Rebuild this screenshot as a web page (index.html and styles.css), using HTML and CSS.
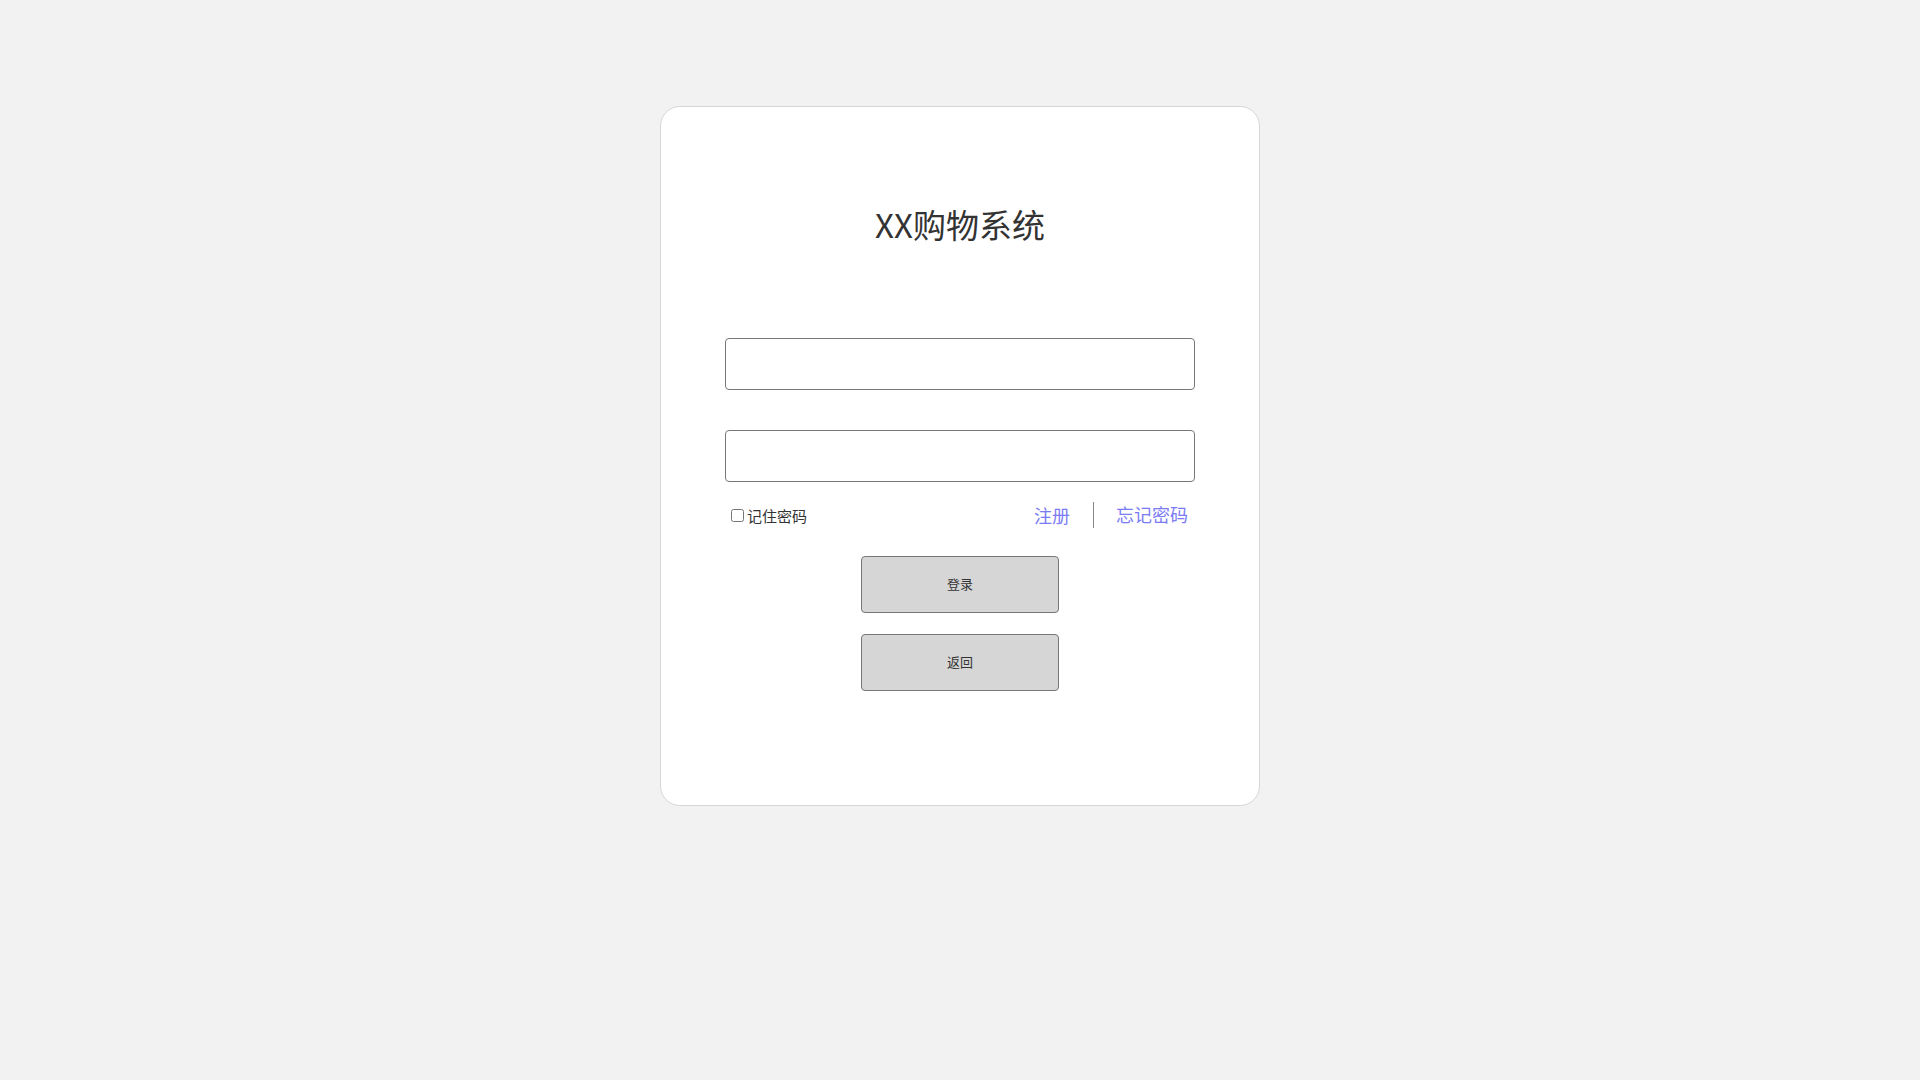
FILE: index.html
```html
<!DOCTYPE html>
<html lang="zh-CN">
<head>
  <meta charset="UTF-8">
  <meta name="viewport" content="width=device-width, initial-scale=1.0">
  <title>XX购物系统 - 登录</title>
  <link rel="stylesheet" href="styles.css">
</head>
<body>
  <div class="login-box">
    <h1 class="title">XX购物系统</h1>

    <form class="login-form" onsubmit="return false">
      <input class="field" type="text" name="username">
      <input class="field" type="password" name="password">

      <div class="options">
        <label class="remember">
          <input type="checkbox" name="remember">记住密码
        </label>
        <div class="links">
          <a href="#">注册</a>
          <span class="sep"></span>
          <a href="#" class="forget">忘记密码</a>
        </div>
      </div>

      <button type="submit" class="btn">登录</button>
      <button type="button" class="btn">返回</button>
    </form>
  </div>
</body>
</html>
```

FILE: styles.css
```css
body {
  margin: 0;
  background-color: #f2f2f2;
  font-family: "Noto Sans CJK SC", "Liberation Sans", sans-serif;
  color: #333;
}
.login-box {
  width: 600px;
  height: 700px;
  box-sizing: border-box;
  margin: 106px auto 0;
  padding-top: 96px;
  background-color: #fff;
  border: 1px solid #d6d6d6;
  border-radius: 20px;
}
.title {
  margin: 0;
  font-size: 33px;
  font-weight: normal;
  line-height: 42px;
  text-align: center;
  color: #333;
}
.login-form {
  width: 470px;
  margin: 93px auto 0;
  display: flex;
  flex-direction: column;
  align-items: center;
}
.field {
  width: 470px;
  height: 52px;
  box-sizing: border-box;
  border: 1px solid #777;
  border-radius: 4px;
  padding: 0 10px;
  font-size: 16px;
  margin: 0 0 40px;
  outline: none;
}
.field + .field {
  margin-bottom: 20px;
}
.options {
  width: 100%;
  height: 26px;
  display: flex;
  align-items: center;
  justify-content: space-between;
  margin-bottom: 28px;
}
.remember {
  display: flex;
  align-items: center;
  font-size: 15px;
  color: #333;
  margin-top: 1px;
}
.remember input {
  width: 13px;
  height: 13px;
  margin: 0 3px 0 6px;
}
.links {
  display: flex;
  align-items: center;
  padding-right: 7px;
  height: 26px;
}
.links a {
  font-size: 18px;
  color: #7b7bf5;
  text-decoration: none;
}
.links a.forget {
  margin-top: -3px;
}
.sep {
  width: 1px;
  height: 26px;
  background-color: #888;
  margin: 0 22px 0 23px;
}
.btn {
  width: 198px;
  height: 57px;
  box-sizing: border-box;
  padding-bottom: 3px;
  background-color: #d6d6d6;
  border: 1px solid #777;
  border-radius: 4px;
  font-family: "Noto Sans CJK SC", sans-serif;
  font-size: 13px;
  color: #333;
  cursor: pointer;
  margin-bottom: 21px;
}
```
